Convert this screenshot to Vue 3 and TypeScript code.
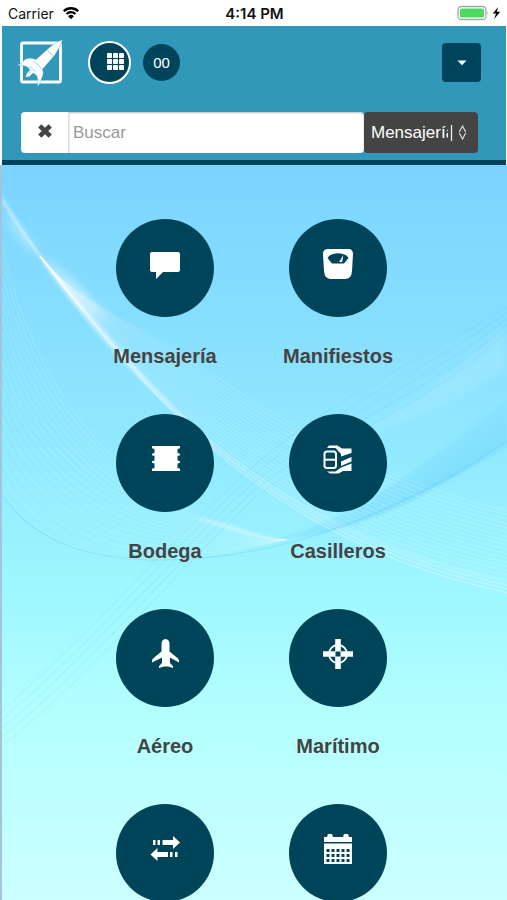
<script setup lang="ts">
import { ref } from 'vue'

interface Tile {
  id: string
  label: string
}

type Point = [number, number]

interface Family {
  from: Point[]
  to: Point[]
  count: number
  color: string
  opacity: number
}

const tiles: Tile[] = [
  { id: 'mensajeria', label: 'Mensajería' },
  { id: 'manifiestos', label: 'Manifiestos' },
  { id: 'bodega', label: 'Bodega' },
  { id: 'casilleros', label: 'Casilleros' },
  { id: 'aereo', label: 'Aéreo' },
  { id: 'maritimo', label: 'Marítimo' },
  { id: 'transferencias', label: '' },
  { id: 'calendario', label: '' },
]

const query = ref('')
const scope = ref('Mensajería')

// Each family is a bundle of cubic curves blended between two outer curves.
const families: Family[] = [
  {
    from: [[38, 91], [75, 140], [150, 165], [215, 212], [300, 270], [400, 320], [505, 345]],
    to: [[38, 91], [90, 160], [150, 230], [211, 284], [300, 360], [400, 405], [505, 427]],
    count: 20, color: '#ffffff', opacity: 0.2,
  },
  {
    from: [[38, 91], [90, 157], [150, 226], [213, 279], [302, 350], [402, 394], [505, 416]],
    to: [[38, 91], [90, 161], [150, 231], [211, 284], [300, 360], [400, 405], [505, 427]],
    count: 4, color: '#ffffff', opacity: 0.3,
  },
  {
    from: [[0, 80], [25, 190], [70, 250], [108, 289], [160, 340], [240, 372], [285, 374]],
    to: [[0, 325], [25, 365], [70, 386], [120, 392], [180, 398], [240, 384], [285, 374]],
    count: 18, color: '#ffffff', opacity: 0.16,
  },
  {
    from: [[0, 328], [30, 375], [85, 392], [150, 395], [280, 396], [390, 350], [505, 276]],
    to: [[0, 330], [35, 378], [85, 394], [160, 394], [290, 394], [400, 340], [505, 282]],
    count: 2, color: '#4fb4ea', opacity: 0.14,
  },
  {
    from: [[0, 545], [80, 475], [150, 395], [230, 320], [320, 235], [420, 195], [505, 142]],
    to: [[0, 580], [90, 510], [170, 410], [250, 335], [330, 270], [440, 235], [505, 165]],
    count: 5, color: '#58b4d8', opacity: 0.12,
  },
]

function curve(p: Point[]): string {
  const at = (i: number) => `${p[i][0].toFixed(1)} ${p[i][1].toFixed(1)}`
  return `M${at(0)}C${at(1)} ${at(2)} ${at(3)}C${at(4)} ${at(5)} ${at(6)}`
}

const strands = families.flatMap((f) =>
  Array.from({ length: f.count }, (_, n) => {
    const t = n / (f.count - 1)
    const points = f.from.map((a, i): Point => [
      a[0] + (f.to[i][0] - a[0]) * t,
      a[1] + (f.to[i][1] - a[1]) * t,
    ])
    return { d: curve(points), color: f.color, opacity: f.opacity }
  }),
)
</script>

<template>
  <div class="screen">
    <div class="status">
      <div class="carrier">
        <span>Carrier</span>
        <svg width="18" height="14" viewBox="0 0 18 14" aria-hidden="true">
          <path d="M1.8 5.2a10.3 10.3 0 0 1 14.4 0M4.5 8a6.4 6.4 0 0 1 9 0" fill="none" stroke="#000" stroke-width="2.3" />
          <path d="M9 13.2 6.1 10.2a4.1 4.1 0 0 1 5.8 0Z" fill="#000" />
        </svg>
      </div>
      <strong class="clock">4:14 PM</strong>
      <div class="power">
        <svg width="44" height="16" viewBox="0 0 44 16" aria-hidden="true">
          <rect x="1" y="1.5" width="28" height="13" rx="3.5" fill="#fff" stroke="#a5a5a5" stroke-width="1.3" />
          <rect x="3" y="3.5" width="24" height="9" rx="1.5" fill="#4cd964" />
          <path d="M30.5 6q1.6 2 0 4Z" fill="#a5a5a5" />
          <path d="m41.2 2-5.4 6.6h3.2L37.2 14l6-7.2h-3.4Z" fill="#000" />
        </svg>
      </div>
    </div>

    <header class="header">
      <div class="toolbar">
        <a class="logo" href="#" aria-label="Inicio">
          <svg width="50" height="50" viewBox="0 0 50 50" aria-hidden="true">
            <rect x="5.5" y="5" width="39" height="39" rx="1.5" fill="none" stroke="#fff" stroke-width="2.8" />
            <path d="M46.7 1.5 40 4.5 34 9 20 21.5C15 19.5 10 19.5 7.500 23 5 25.500 3 27 0 27.500c4 0 8 0 11 1.200l3 3-3.500 4-1 3.500 3.500-.5 4-3.500c2 .5 4 2 4.500 5 .5 3 .5 6-.3 9 2.500-3 4-6 4.800-10 1.500-2 1.500-5 .5-8L38.500 17.500 43 10Z" fill="#fff" stroke="#3198ba" stroke-width="0.4" />
            <path d="m31.5 12.5 6 6M18 23l8 8M13 28.500l7 5M12.500 36l3-3.500" stroke="#8cc8dc" stroke-width="0.9" fill="none" />
          </svg>
        </a>
        <button class="apps" type="button" aria-label="Aplicaciones">
          <svg width="17" height="17" viewBox="0 0 17 17" aria-hidden="true">
            <g fill="#fff">
              <template v-for="r in 3" :key="r">
                <rect v-for="c in 3" :key="c" :x="(c - 1) * 6" :y="(r - 1) * 6" width="5" height="5" rx="0.8" />
              </template>
            </g>
          </svg>
        </button>
        <button class="count" type="button">00</button>
        <button class="menu" type="button" aria-label="Menú">
          <svg width="10" height="6" viewBox="0 0 10 6" aria-hidden="true"><path d="M.5.5h9L5 5.200Z" fill="#fff" /></svg>
        </button>
      </div>

      <form class="search" @submit.prevent>
        <button class="clear" type="button" aria-label="Borrar" @click="query = ''">
          <svg width="18" height="18" viewBox="0 0 18 18" aria-hidden="true">
            <path d="m3.8 3.800 10.400 10.400M14.200 3.800 3.800 14.200" stroke="#444" stroke-width="4.600" />
          </svg>
        </button>
        <input v-model="query" class="field" type="text" placeholder="Buscar" aria-label="Buscar" />
        <div class="scope">
          <select v-model="scope" aria-label="Sección">
            <option>Mensajería</option>
            <option>Manifiestos</option>
            <option>Bodega</option>
          </select>
          <svg width="22" height="20" viewBox="0 0 22 20" aria-hidden="true">
            <path d="M3.5 2v16" stroke="#eee" stroke-width="1.3" />
            <path d="M11.3 9 14.5 3l3.200 6M11.300 10l3.200 6 3.200-6" fill="none" stroke="#ddd" stroke-width="1.2" />
          </svg>
        </div>
      </form>
    </header>

    <main class="home">
      <svg class="waves" viewBox="0 0 505 734" preserveAspectRatio="none" aria-hidden="true">
        <defs>
          <linearGradient id="sheen" gradientUnits="userSpaceOnUse" x1="0" y1="30" x2="230" y2="300">
            <stop offset="0" stop-color="#fff" stop-opacity="0.3" />
            <stop offset="0.25" stop-color="#fff" stop-opacity="0.5" />
            <stop offset="1" stop-color="#fff" stop-opacity="0" />
          </linearGradient>
          <linearGradient id="band" gradientUnits="userSpaceOnUse" x1="385" y1="285" x2="410" y2="332">
            <stop offset="0" stop-color="#4fbdf5" stop-opacity="0" />
            <stop offset="1" stop-color="#4fbdf5" stop-opacity="0.26" />
          </linearGradient>
          <filter id="soft" x="-30%" y="-30%" width="160%" height="160%">
            <feGaussianBlur stdDeviation="5" />
          </filter>
          <filter id="fine" x="-10%" y="-10%" width="120%" height="120%">
            <feGaussianBlur stdDeviation="1" />
          </filter>
        </defs>
        <path d="M262 376C360 355 430 290 505 235V279C430 325 370 368 262 376Z" fill="url(#band)" filter="url(#fine)" />
        <path d="M350 270C410 240 460 200 505 160V205C460 230 410 260 350 270Z" fill="#fff" fill-opacity="0.12" filter="url(#soft)" />
        <path d="M0 34C10 70 25 82 38 91L0 40ZM38 91C50 100 70 110 110 160L80 140Z" fill="#fff" fill-opacity="0.6" filter="url(#soft)" />
        <path d="M190 352C215 352 240 364 275 374 240 370 215 360 190 352Z" fill="#fff" fill-opacity="0.3" filter="url(#fine)" />
        <path d="M0 30Q20 64 38 89C90 152 160 235 220 284 140 228 80 155 38 93Q18 68 0 38Z" fill="url(#sheen)" filter="url(#fine)" />
        <path v-for="(s, i) in strands" :key="i" :d="s.d" :stroke="s.color" :stroke-opacity="s.opacity" fill="none" />
      </svg>

      <nav class="grid" aria-label="Secciones">
        <a v-for="tile in tiles" :key="tile.id" class="tile" :href="'#' + tile.id" :aria-label="tile.label || tile.id">
          <span class="disc">
            <svg width="30" height="30" viewBox="0 0 30 30" aria-hidden="true" fill="#fff">
              <path v-if="tile.id === 'mensajeria'" d="M2 3h26q2 0 2 2v16q0 2-2 2H13l-7 7v-7H2q-2 0-2-2V5q0-2 2-2Z" />
              <g v-else-if="tile.id === 'manifiestos'">
                <path d="M5 0h20q5 0 5 5l-1 17q-.5 8-7 8H8q-6.500 0-7-8L0 5q0-5 5-5Z" />
                <path d="M4.500 9C8 2.500 22 2.500 25.500 9L21 14.500H9Z" fill="#004459" />
                <path d="M20.300 6 19.200 13h-3Z" />
              </g>
              <path v-else-if="tile.id === 'bodega'" d="M2 2h28v2.300l-2.500.7v4l2.500.8v1.400l-2.500.8v4.500l2.500.8v1.400l-2.500.8v4.500l2.500.7V27H2v-2.300l2.500-.7v-4.500L2 18.700v-1.400l2.500-.8V12L2 11.200V9.800L4.500 9V5L2 4.300Z" />
              <g v-else-if="tile.id === 'casilleros'">
                <path d="M6 1.500h8.500l4.500 3h9.500V9L18 12.500V10l-5.500-6H4ZM18 17.500 28.500 13v4.500L18 22ZM28.500 19.500V27H20l-4.500 2.500H7l-3-2h8.500l5.500-4Z" />
                <rect x="1.5" y="7.500" width="11.500" height="16.500" rx="2.500" fill="#004459" stroke="#fff" stroke-width="2" />
                <path d="M1.500 15.700H13" stroke="#fff" stroke-width="2" />
              </g>
              <path v-else-if="tile.id === 'aereo'" d="M15.500 0Q19.500 .5 19.500 5v7.500l8.500 7q1.500 1.500 1 4L20 18.500v5.500l2.500 2.500q1 1 .5 2.500l-5-1.500h-4L9 29q-.5-1.500.5-2.500L12 24v-5.500L2 23.500q-.5-2.500 1-4l8.500-7V5Q11.500.5 15.500 0Z" />
              <g v-else-if="tile.id === 'maritimo'">
                <circle cx="15" cy="15" r="9" fill="none" stroke="#fff" stroke-width="1.8" />
                <path d="M12.200 0h5.600v12.200H30v5.600H17.800V30h-5.600V17.800H0v-5.600h12.200Z" />
                <path d="M12.500 12.500h5v5h-5Z" fill="#004459" />
              </g>
              <path v-else-if="tile.id === 'transferencias'" d="M3 6h2.500v5H3ZM7.500 6H10v5H7.500ZM12.500 6H23V2l7 6.500-7 6.500v-4H12.500ZM18 18v5H7.500v4l-7-6.500 7-6.500v4ZM20 18h2.500v5H20ZM25 18h2.500v5H25Z" />
              <g v-else>
                <path d="M1 3h3l1-3h4l1 3h10l1-3h4l1 3h3v5H1ZM1 9.500h28V30H1Z" />
                <g fill="#004459">
                  <template v-for="r in 3" :key="r">
                    <rect v-for="c in 5" :key="c" :x="c * 5 - 1.5" :y="r * 5 + 10" width="3" height="3" />
                  </template>
                </g>
              </g>
            </svg>
          </span>
          <span class="label">{{ tile.label }}</span>
        </a>
      </nav>
    </main>
  </div>
</template>

<style>
body {
  margin: 0;
  background: #fff;
}
</style>

<style scoped>
.screen {
  display: flex;
  flex-direction: column;
  height: 100vh;
  overflow: hidden;
  font-family: "Liberation Sans", Arial, sans-serif;
  color: #444;
}

.screen * {
  box-sizing: border-box;
}

button {
  display: flex;
  align-items: center;
  justify-content: center;
  padding: 0;
  border: 0;
  font-family: inherit;
  cursor: pointer;
}

.status {
  display: grid;
  grid-template-columns: 1fr auto 1fr;
  align-items: center;
  flex: none;
  height: 26px;
  padding: 0 6px 0 8px;
  background: #fff;
  color: #111;
  font-family: Inter, sans-serif;
  font-size: 14px;
}

.carrier {
  display: flex;
  align-items: center;
  gap: 8px;
}

.clock {
  font-size: 15px;
  font-weight: 600;
}

.power {
  display: flex;
  justify-content: flex-end;
}

.header {
  flex: none;
  margin: 0 1px 0 2px;
  padding: 10px 25px 7px 14px;
  background: #3198ba;
  border-bottom: 5px solid #00445c;
}

.toolbar {
  display: flex;
  align-items: center;
  height: 53px;
}

.logo {
  display: block;
  width: 50px;
  height: 50px;
}

.apps {
  width: 43px;
  height: 43px;
  margin-left: 22px;
  padding-left: 12px;
  padding-bottom: 3px;
  border: 2px solid #fff;
  border-radius: 50%;
  background: #004459;
}

.count {
  width: 37px;
  height: 37px;
  margin-left: 12px;
  border-radius: 50%;
  background: #00445c;
  color: #fff;
  font-size: 15px;
}

.menu {
  width: 39px;
  height: 39px;
  margin-left: auto;
  border-radius: 4px;
  background: #00445c;
}

.search {
  display: flex;
  height: 41px;
  margin: 23px 3px 0 5px;
}

.clear {
  width: 48px;
  padding-bottom: 4px;
  border-right: 1px solid #ddd;
  border-radius: 4px 0 0 4px;
  background: #fff;
}

.field {
  flex: 1;
  min-width: 0;
  padding: 0 4px;
  border: 0;
  border-radius: 0 4px 4px 0;
  background: #fff;
  box-shadow: inset 0 1px 2px #bbb;
  color: #444;
  font: 17px "Liberation Sans", Arial, sans-serif;
}

.field::placeholder {
  color: #999;
  opacity: 1;
}

.scope {
  display: flex;
  align-items: center;
  width: 114px;
  border-radius: 4px;
  background: #444;
}

.scope select {
  width: 84px;
  height: 100%;
  padding: 0 0 0 7px;
  border: 0;
  appearance: none;
  background: transparent;
  color: #fff;
  font: 17px "Liberation Sans", Arial, sans-serif;
}

.home {
  position: relative;
  flex: 1;
  min-height: 0;
  overflow-y: auto;
  scrollbar-width: none;
  padding: 54px 6px 0 0;
  border-left: 2px solid #a3c4da;
  background: linear-gradient(#7ad4ff, #86deff 20%, #93ebff 42%, #a0f8ff 60%, #b4ffff 75%, #ccffff);
}

.waves {
  position: absolute;
  inset: 0;
  width: 100%;
  height: 100%;
}

.grid {
  position: relative;
  display: grid;
  grid-template-columns: repeat(2, 173px);
  grid-auto-rows: 195px;
  justify-content: center;
}

.tile {
  display: flex;
  flex-direction: column;
  align-items: center;
  gap: 27px;
  color: #444;
  text-decoration: none;
}

.disc {
  display: flex;
  align-items: center;
  justify-content: center;
  width: 98px;
  height: 98px;
  padding-bottom: 8px;
  border-radius: 50%;
  background: #004459;
}

.label {
  font-size: 20px;
  line-height: 24px;
  font-weight: 700;
}
</style>
